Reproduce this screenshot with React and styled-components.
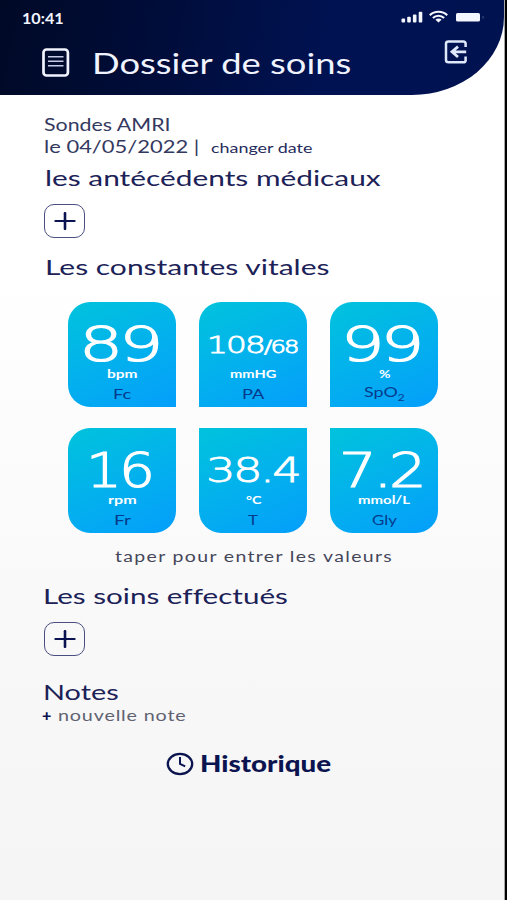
import React, { useLayoutEffect, useRef, useState } from "react";
import styled, { createGlobalStyle } from "styled-components";

// wide text: stretches its content to the given width
const WideText = ({ width, children }) => {
  const ref = useRef(null);
  const [scale, setScale] = useState(1);

  useLayoutEffect(() => {
    setScale(width / ref.current.offsetWidth);
  }, [width, children]);

  return (
    <WideBox $width={width}>
      <WideInner ref={ref} style={{ transform: `scaleX(${scale})` }}>
        {children}
      </WideInner>
    </WideBox>
  );
};

const vitals = [
  { value: "89", size: 48, width: 81, unit: "bpm", unitWidth: 31, label: "Fc", labelWidth: 19, radius: "22px 22px 0 22px" },
  { value: "108", small: "/68", size: 23, width: 91, unit: "mmHG", unitWidth: 46, label: "PA", labelWidth: 23, radius: "22px 22px 0 0" },
  { value: "99", size: 48, width: 80, unit: "%", unitWidth: 11, label: "SpO", sub: "2", labelWidth: 41, radius: "22px 22px 22px 0" },
  { value: "16", size: 48, width: 66, unit: "rpm", unitWidth: 28, label: "Fr", labelWidth: 17, radius: "22px 0 22px 22px" },
  { value: "38.4", size: 34, width: 93, unit: "°C", unitWidth: 15, label: "T", labelWidth: 10, radius: "0 0 22px 22px" },
  { value: "7.2", size: 48, width: 84, unit: "mmol/L", unitWidth: 52, label: "Gly", labelWidth: 25, radius: "0 22px 22px 22px" },
];

const App = () => {
  return (
    <>
      <GlobalStyle />
      <Screen>
        <Header>
          <StatusBar>
            <Time>
              <WideText width={42}>10:41</WideText>
            </Time>
            <StatusIcons />
          </StatusBar>
          <TitleRow>
            <NoteIcon />
            <Title>
              <WideText width={259}>Dossier de soins</WideText>
            </Title>
            <ExitIcon />
          </TitleRow>
        </Header>

        <Main>
          <Patient>
            <WideText width={127}>Sondes AMRI</WideText>
          </Patient>
          <DateRow>
            <WideText width={155}>le 04/05/2022 |</WideText>
            <ChangeDate>
              <WideText width={101}>changer date</WideText>
            </ChangeDate>
          </DateRow>

          <SectionTitle $top={6} $indent={1}>
            <WideText width={335}>les antécédents médicaux</WideText>
          </SectionTitle>
          <AddButton aria-label="ajouter un antécédent">
            <PlusIcon />
          </AddButton>

          <SectionTitle $top={15} $indent={1}>
            <WideText width={285}>Les constantes vitales</WideText>
          </SectionTitle>
          <VitalsGrid>
            {vitals.map((item) => (
              <VitalCard key={item.label} $radius={item.radius}>
                <Value $size={item.size}>
                  <WideText width={item.width}>
                    {item.value}
                    {item.small && <SmallValue>{item.small}</SmallValue>}
                  </WideText>
                </Value>
                <Unit>
                  <WideText width={item.unitWidth}>{item.unit}</WideText>
                </Unit>
                <Label $raised={Boolean(item.sub)}>
                  <WideText width={item.labelWidth}>
                    {item.label}
                    {item.sub && <Sub>{item.sub}</Sub>}
                  </WideText>
                </Label>
              </VitalCard>
            ))}
          </VitalsGrid>
          <Hint>
            <WideText width={278}>taper pour entrer les valeurs</WideText>
          </Hint>

          <SectionTitle $top={15}>
            <WideText width={245}>Les soins effectués</WideText>
          </SectionTitle>
          <AddButton aria-label="ajouter un soin">
            <PlusIcon />
          </AddButton>

          <SectionTitle $top={22}>
            <WideText width={76}>Notes</WideText>
          </SectionTitle>
          <NewNote>
            <Plus>
              <WideText width={10}>+</WideText>
            </Plus>
            <WideText width={128}>nouvelle note</WideText>
          </NewNote>

          <History>
            <ClockIcon />
            <WideText width={131}>Historique</WideText>
          </History>
        </Main>
      </Screen>
    </>
  );
};

export default App;

const StatusIcons = () => (
  <svg width="84" height="14" viewBox="0 0 84 14" fill="#f4f7ff">
    <rect x="0.5" y="8.5" width="3.6" height="4" rx="1" />
    <rect x="6.2" y="6.8" width="3.6" height="5.7" rx="1" />
    <rect x="11.9" y="4.4" width="3.6" height="8.1" rx="1" />
    <rect x="17.7" y="1.8" width="3.6" height="10.7" rx="1" />
    <g fill="none" stroke="#f4f7ff" strokeWidth="2.2">
      <path d="M28.8 5.2 C33.5 0.6 41.5 0.6 46.2 5.2" />
      <path d="M31.9 8 C35 5 40 5 43.1 8" />
    </g>
    <path d="M34.4 9.8 C36.2 8.2 38.8 8.2 40.6 9.8 L37.5 12.4 Z" />
    <rect x="55" y="3" width="24" height="8.6" rx="1.6" />
    <path d="M81.6 5.4 V9 C83 8.4 83 6 81.6 5.4 Z" opacity="0.35" />
  </svg>
);

const NoteIcon = () => (
  <svg width="28" height="29" viewBox="0 0 28 29" fill="none">
    <rect x="1.5" y="1.5" width="24.4" height="26" rx="3" stroke="#f1f4ff" strokeWidth="2.7" />
    <path d="M6 8.8 H21.5 M6 13.3 H21.5 M6 17.8 H21.5" stroke="#c5cbe6" strokeWidth="1.6" />
  </svg>
);

const ExitIcon = () => (
  <svg width="24" height="24" viewBox="0 0 24 24" fill="none" stroke="#dfe9fb" strokeWidth="2.5">
    <path d="M21.6 7 V3.6 Q21.6 1.6 19.4 1.6 H4.6 Q2 1.6 2 3.8 V20 Q2 22.3 4.6 22.3 H19.4 Q21.6 22.3 21.6 20.2 V16.5" />
    <path d="M22.2 11.8 H8.5 M14 6.6 L8 11.8 L14 17" strokeWidth="2.8" />
  </svg>
);

const PlusIcon = () => (
  <svg width="22" height="18" viewBox="0 0 22 18" fill="none" stroke="#0b1350">
    <path d="M1.4 9 H20.6" strokeWidth="2.2" strokeLinecap="round" />
    <path d="M11 1.2 V16.8" strokeWidth="2.6" strokeLinecap="round" />
  </svg>
);

const ClockIcon = () => (
  <svg width="28" height="24" viewBox="0 0 28 24" fill="none" stroke="#0c1450">
    <ellipse cx="14" cy="12" rx="12.2" ry="10.2" strokeWidth="2.3" />
    <path d="M14 5 V11.8 L19.2 14.4" strokeWidth="2" />
  </svg>
);

const GlobalStyle = createGlobalStyle`
  body {
    margin: 0;
    background-color: #000;
    font-family: Lato, "Liberation Sans", sans-serif;
    font-variant-ligatures: none;
  }
`;

const WideBox = styled.span`
  display: inline-block;
  flex: none;
  width: ${(props) => props.$width}px;
  text-align: left;
  white-space: nowrap;
`;

const WideInner = styled.span`
  display: inline-block;
  transform-origin: left center;
`;

const Screen = styled.div`
  box-sizing: border-box;
  width: 505px;
  height: 900px;
  border-right: 1px solid #a5a5a5;
  background: linear-gradient(#fff 0, #fff 270px, #f9f9fa 600px, #f5f5f5 860px);
  overflow: hidden;
`;

const Header = styled.header`
  box-sizing: border-box;
  height: 95px;
  padding-top: 8px;
  border-bottom-right-radius: 92px 78px;
  background: linear-gradient(100deg, #000926 0%, #000d3c 35%, #001252 65%, #001250 100%);
  color: #f1f4ff;
`;

const StatusBar = styled.div`
  display: flex;
  justify-content: space-between;
  height: 20px;
  padding: 0 19px 0 22px;

  svg {
    margin-top: 2px;
  }
`;

const Time = styled.div`
  font-size: 15px;
  line-height: 20px;
  font-weight: 700;
`;

const TitleRow = styled.div`
  display: flex;
  height: 60px;
  padding: 0 36px 0 42px;

  svg:first-child {
    margin-top: 20px;
  }

  svg:last-child {
    margin: 12px 0 0 auto;
  }
`;

const Title = styled.h1`
  margin: 16px 0 0 22px;
  font-size: 28.5px;
  line-height: 38px;
  font-weight: 400;
`;

const Main = styled.main`
  display: flex;
  flex-direction: column;
  align-items: flex-start;
  padding: 20px 44px 0;
  color: #1c2257;
`;

const Patient = styled.div`
  height: 21px;
  font-size: 17px;
  line-height: 20px;
  color: #34395f;
`;

const DateRow = styled.div`
  display: flex;
  height: 22px;
  font-size: 17px;
  line-height: 22px;
  color: #34395f;
`;

const ChangeDate = styled.span`
  margin-left: 12px;
  font-size: 14px;
  line-height: 24px;
  color: #262c5c;
`;

const SectionTitle = styled.h2`
  height: 28px;
  margin: ${(props) => props.$top}px 0 0 ${(props) => props.$indent || -1}px;
  font-size: 22px;
  line-height: 28px;
  font-weight: 400;
`;

const AddButton = styled.button`
  display: flex;
  align-items: center;
  justify-content: center;
  width: 41px;
  height: 34px;
  margin: 12px 0 0;
  padding: 0;
  border: 1.4px solid #4a4e80;
  border-radius: 10px;
  background: transparent;
  cursor: pointer;
`;

const VitalsGrid = styled.div`
  display: grid;
  grid-template-columns: repeat(3, 108px);
  grid-auto-rows: 105px;
  gap: 21px 23px;
  margin: 21px 0 0 24px;
`;

const VitalCard = styled.div`
  display: flex;
  flex-direction: column;
  align-items: center;
  border-radius: ${(props) => props.$radius};
  background: linear-gradient(155deg, #00c3dc 0%, #03b2ec 48%, #049efb 100%);
  color: #fff;
`;

const Value = styled.div`
  height: 65px;
  margin-right: ${(props) => (props.$size > 40 ? 6 : 2)}px;
  font-family: "DejaVu Sans", "DejaVu Sans Light", sans-serif;
  font-size: ${(props) => props.$size}px;
  line-height: ${(props) => (props.$size < 30 ? 87 : 84)}px;
  font-weight: 200;
  letter-spacing: -0.055em;
  -webkit-text-stroke: ${(props) => (props.$size > 40 ? 1.2 : 0.8)}px #fff;
`;

const SmallValue = styled.span`
  font-size: 17px;
`;

const Unit = styled.div`
  height: 19px;
  font-size: 11.5px;
  line-height: 14px;
  font-weight: 700;
`;

const Label = styled.div`
  height: 18px;
  font-size: 13.5px;
  line-height: ${(props) => (props.$raised ? 13 : 16)}px;
  color: #063a8c;
`;

const Sub = styled.sub`
  font-size: 9px;
  line-height: 0;
`;

const Hint = styled.div`
  height: 20px;
  margin: 14px 0 0 71px;
  font-size: 14.5px;
  line-height: 20px;
  letter-spacing: 1px;
  color: #454759;
`;

const NewNote = styled.div`
  display: flex;
  height: 18px;
  margin: 1px 0 0 -2px;
  gap: 6px;
  font-size: 14.5px;
  line-height: 18px;
  letter-spacing: 0.6px;
  color: #606272;
`;

const Plus = styled.span`
  color: #0b1350;
  font-weight: 900;
`;

const History = styled.div`
  display: flex;
  align-items: center;
  gap: 6px;
  height: 26px;
  margin: 26px 0 0 122px;
  font-size: 22px;
  line-height: 26px;
  font-weight: 900;
  color: #0c1450;
`;
